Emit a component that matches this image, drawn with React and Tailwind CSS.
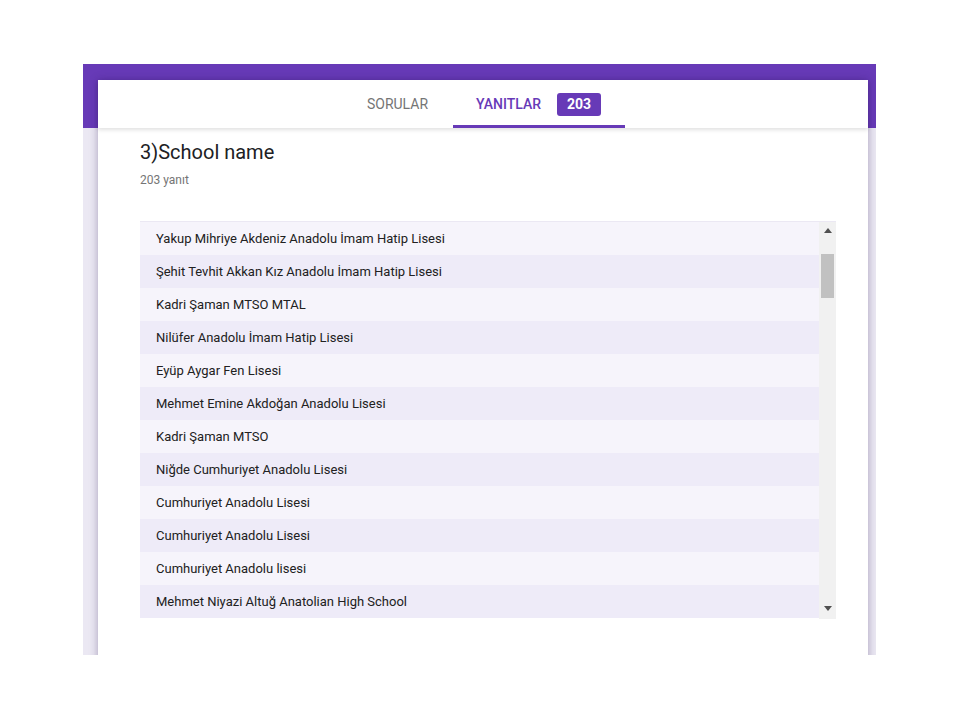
const schools = [
  "Yakup Mihriye Akdeniz Anadolu İmam Hatip Lisesi",
  "Şehit Tevhit Akkan Kız Anadolu İmam Hatip Lisesi",
  "Kadri Şaman MTSO MTAL",
  "Nilüfer Anadolu İmam Hatip Lisesi",
  "Eyüp Aygar Fen Lisesi",
  "Mehmet Emine Akdoğan Anadolu Lisesi",
  "Kadri Şaman MTSO",
  "Niğde Cumhuriyet Anadolu Lisesi",
  "Cumhuriyet Anadolu Lisesi",
  "Cumhuriyet Anadolu Lisesi",
  "Cumhuriyet Anadolu lisesi",
  "Mehmet Niyazi Altuğ Anatolian High School",
];

export default function App() {
  return (
    <div className="min-h-[720px] bg-white pt-[64px] pl-[83px] font-['Roboto',sans-serif]">
      {/* outer frame: purple band on top, lavender below, cut at the bottom */}
      <div className="w-[793px] h-[591px] overflow-hidden bg-[linear-gradient(to_bottom,#673ab7_64px,#ebe8f3_64px)] pt-[16px] pl-[15px] pr-[8px]">
        <div className="h-[600px] bg-white shadow-[0_0_8px_rgba(40,20,80,0.35)] flex flex-col">
          {/* tabs header */}
          <div className="relative z-10 h-[48px] flex justify-center shadow-[0_2px_4px_rgba(0,0,0,0.12)]">
            <div className="w-[112px] flex items-center justify-center text-[14px] font-normal text-[#757575]">
              SORULAR
            </div>
            <div className="w-[172px] -ml-[1px] flex items-center justify-center gap-[16px] border-b-[3px] border-[#673ab7] pt-[3px]">
              <span className="text-[14px] font-medium text-[#673ab7]">YANITLAR</span>
              <span className="w-[44px] h-[23px] rounded-[3px] bg-[#673ab7] text-white text-[14px] font-bold flex items-center justify-center">
                203
              </span>
            </div>
          </div>

          {/* content */}
          <div className="pl-[42px] pr-[32px]">
            <h2 className="mt-[10px] text-[20px] leading-7 text-[#202124]">3)School name</h2>
            <p className="mt-[6px] text-[12px] leading-4 text-[#757575]">203 yanıt</p>

            <div className="mt-[33px] h-[398px] border-t border-[#ebe8f3] flex overflow-hidden">
              <div className="flex-1">
                {schools.map((s, i) => (
                  <div
                    key={i}
                    className={
                      "h-[33px] flex items-center pl-[16px] text-[13px] text-[#212121] " +
                      (i % 2 === 0 ? "bg-[#f6f4fb]" : "bg-[#eeebf8]")
                    }
                  >
                    {s}
                  </div>
                ))}
              </div>

              {/* scrollbar */}
              <div className="w-[17px] bg-[#f1f1f1] flex flex-col items-center">
                <div className="h-[16px] flex items-center justify-center pt-[1px]">
                  <svg width="8" height="5" viewBox="0 0 8 5">
                    <path d="M0 5 L4 0 L8 5 Z" fill="#505050" />
                  </svg>
                </div>
                <div className="mt-[16px] w-[13px] h-[44px] bg-[#c1c1c1]" />
                <div className="flex-1" />
                <div className="h-[16px] mb-[3px] flex items-center justify-center">
                  <svg width="8" height="5" viewBox="0 0 8 5">
                    <path d="M0 0 L8 0 L4 5 Z" fill="#505050" />
                  </svg>
                </div>
              </div>
            </div>
          </div>
        </div>
      </div>
    </div>
  );
}
